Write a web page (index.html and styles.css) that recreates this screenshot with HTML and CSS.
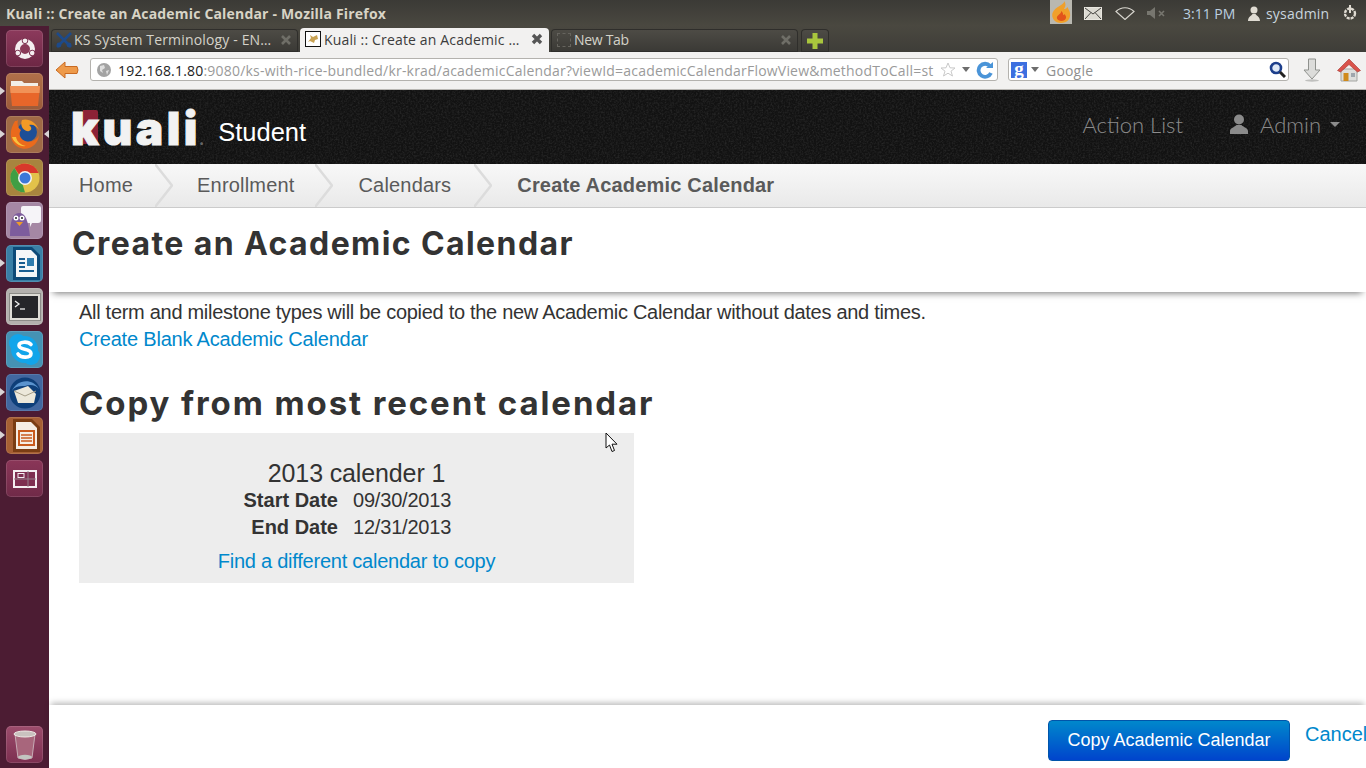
FILE: index.html
```html
<!DOCTYPE html>
<html lang="en">
<head>
<meta charset="utf-8">
<title>Kuali :: Create an Academic Calendar</title>
<link rel="stylesheet" href="styles.css">
</head>
<body>
<div class="screen">
  <header class="panel">
    <div class="panel-title">Kuali :: Create an Academic Calendar - Mozilla Firefox</div>
    <div class="tray">
      <span class="tray-flame"><svg width="22" height="24" viewBox="0 0 22 24"><path d="M14 1C15 5 5 6 2.500 13C1 18 5 23 11 23C17 23 21 19 20 13C19.500 10 18 9 17.500 7C16 9 15 9 14 9C16 6 16 3 14 1Z" fill="#f0a02a"/><path d="M11 11C12 14 6 15 7 18.500C8 21.500 15 22 16 18C16.500 16 15 15 14.500 14C14 15.500 13 15 13 14C13 13 12.500 12 11 11Z" fill="#e2541a"/></svg></span>
      <svg class="tray-mail" width="18" height="13" viewBox="0 0 18 13"><rect x="0.500" y="0.500" width="17" height="12" fill="#dcdad2" stroke="#e8e6df"/><path d="M1 1L9 7L17 1M1 12L7 5.500M17 12L11 5.500" fill="none" stroke="#44433f" stroke-width="1"/></svg>
      <svg class="tray-wifi" width="20" height="13" viewBox="0 0 20 13"><path d="M1 4.500C6 -0.500 14 -0.500 19 4.500L10 12.500Z" fill="none" stroke="#d8d6cf" stroke-width="1.200"/></svg>
      <svg class="tray-sound" width="19" height="12" viewBox="0 0 19 12"><path d="M0 4H3L8 0V12L3 8H0Z" fill="#77766f"/><path d="M12 4L17 9M17 4L12 9" stroke="#77766f" stroke-width="1.600"/></svg>
      <span class="tray-clock">3:11 PM</span>
      <svg class="tray-user" width="12" height="15" viewBox="0 0 12 15"><circle cx="6" cy="4" r="3.500" fill="#dfdbd2"/><path d="M0 15C0 11 3 10 4.500 8H7.500C9 10 12 11 12 15Z" fill="#dfdbd2"/></svg>
      <span class="tray-name">sysadmin</span>
      <svg class="tray-gear" width="16" height="16" viewBox="0 0 16 16"><circle cx="8" cy="8.500" r="5" fill="none" stroke="#dfdbd2" stroke-width="2.400" stroke-dasharray="3 1"/><path d="M8 0V8" stroke="#dfdbd2" stroke-width="2"/></svg>
    </div>
  </header>

  <div class="desk">
    <nav class="launcher">
      <div class="tile tile-ubuntu"><svg width="24" height="24" viewBox="0 0 24 24"><circle cx="12" cy="12" r="7.500" fill="#8a3a58" stroke="#f4eef0" stroke-width="5"/><circle cx="12" cy="3.800" r="2.800" fill="#f4eef0" stroke="#7c2f4e"/><circle cx="4.800" cy="16" r="2.800" fill="#f4eef0" stroke="#7c2f4e"/><circle cx="19.200" cy="16" r="2.800" fill="#f4eef0" stroke="#7c2f4e"/></svg></div>
      <div class="tile tile-files pip"><svg width="30" height="28" viewBox="0 0 30 28"><path d="M1 3H12L14 5H28V10H1Z" fill="#f3efe8"/><path d="M0 8H30L28 28H2Z" fill="#e8662a"/><path d="M0 8H30L29.500 15H0.500Z" fill="#f19257"/></svg></div>
      <div class="tile tile-firefox pip pip-both"><svg width="33" height="33" viewBox="0 0 33 33"><circle cx="19" cy="14" r="10" fill="#1d4f97"/><path d="M7 3C1 12 1 24 10 29C19 34 30 28 31 17C29 22 23 25 17 23C12 21 10 16 13 12C10 10 9 7 10 2C9 3 8 3 7 3Z" fill="#ea6a1c"/><path d="M14 2C20 0 28 4 31 12C28 7 24 6 21 7C24 9 24 12 21 13C18 14 15 11 14 9C13 7 13 4 14 2Z" fill="#f29a26"/><path d="M4 19C6 25 12 29 18 28C13 27 9 24 8 19Z" fill="#f8c23e"/></svg></div>
      <div class="tile tile-chrome"><svg width="30" height="30" viewBox="0 0 30 30"><circle cx="15" cy="15" r="14.500" fill="#e2c24a"/><path d="M15 .500A14.500 14.500 0 0 1 28.600 10H15A5 5 0 0 0 10 13L4.500 5A14.500 14.500 0 0 1 15 .500Z" fill="#d8392b"/><path d="M4.500 5L11 16L15 29.500A14.500 14.500 0 0 1 4.500 5Z" fill="#3f9e44"/><circle cx="15" cy="15" r="7" fill="#f4f4f4"/><circle cx="15" cy="15" r="5.500" fill="#3c78d8"/></svg></div>
      <div class="tile tile-pidgin"><svg width="34" height="32" viewBox="0 0 34 32"><path d="M15 1H31Q33 1 33 3V15Q33 18 30 18H24L22 22V18H15Q13 18 13 16V3Q13 1 15 1Z" fill="#f6f4f8"/><path d="M2 31C2 18 4 8 11 8C18 8 20 16 22 31Z" fill="#7d5c9d"/><circle cx="8" cy="13" r="2.500" fill="#fff"/><circle cx="14" cy="13" r="2.500" fill="#fff"/><circle cx="8" cy="13" r="1" fill="#222"/><circle cx="14" cy="13" r="1" fill="#222"/><path d="M8 17H15L11.500 21Z" fill="#ec9a2a"/></svg></div>
      <div class="tile tile-writer pip"><svg width="30" height="33" viewBox="0 0 30 33"><path d="M3 0H22L30 8V33H3Z" fill="#0d4a78"/><path d="M6 3H21L27 9V30H6Z" fill="#f4f6f8"/><path d="M9 12H15M9 16H15M9 20H15M9 24H24" stroke="#1a5e91" stroke-width="2"/><rect x="17" y="11" width="7" height="8" fill="#2f7cae"/></svg></div>
      <div class="tile tile-term"><svg width="32" height="28" viewBox="0 0 32 28"><rect x=".500" y=".500" width="31" height="27" fill="#dedcd7" stroke="#8d8c88"/><rect x="3" y="3" width="26" height="22" fill="#26262a"/><path d="M6 8L10 11L6 14" fill="none" stroke="#eee" stroke-width="1.300"/><path d="M11 16H16" stroke="#eee" stroke-width="1.300"/></svg></div>
      <div class="tile tile-skype"><svg width="33" height="33" viewBox="0 0 33 33"><circle cx="10" cy="10" r="9" fill="#12a5ea"/><circle cx="23" cy="23" r="9" fill="#12a5ea"/><circle cx="16.500" cy="16.500" r="13.500" fill="#12a5ea"/><path d="M23 11.500C20 8 11 8.500 11 12.500C11 17.500 23 15 23 20.500C23 25 13 25.500 10 21" fill="none" stroke="#fff" stroke-width="3.600" stroke-linecap="round"/></svg></div>
      <div class="tile tile-bird pip"><svg width="33" height="32" viewBox="0 0 33 32"><circle cx="17" cy="16" r="15.500" fill="#0e3f79"/><path d="M4 14C8 3 24 0 31 12C28 8 22 7 17 9C10 9 6 10 4 14Z" fill="#5a93ce"/><path d="M6 14L20 9L28 17L26 26H10Z" fill="#ece8da"/><path d="M6 14L17 19L28 14" fill="none" stroke="#a59e88"/></svg></div>
      <div class="tile tile-impress pip"><svg width="30" height="33" viewBox="0 0 30 33"><path d="M3 0H22L30 8V33H3Z" fill="#7a3d14"/><path d="M6 3H21L27 9V30H6Z" fill="#f5ede4"/><rect x="9" y="12" width="15" height="14" fill="none" stroke="#c85a1c" stroke-width="2"/><path d="M11 16H22M11 19H22M11 22H22" stroke="#c85a1c" stroke-width="1.500"/></svg></div>
      <div class="tile tile-work"><svg width="24" height="18" viewBox="0 0 24 18"><rect x="1" y="1" width="22" height="16" fill="#7e2f50" stroke="#f4eef0" stroke-width="2"/><path d="M15 1V17M1 9H23" stroke="#96808a" stroke-width="1"/><rect x="5" y="3.500" width="6" height="4" fill="none" stroke="#f4eef0"/></svg></div>
      <div class="tile tile-trash"><svg width="24" height="30" viewBox="0 0 24 30"><path d="M2 4L5 28Q12 31 19 28L22 4Z" fill="#a8667c" stroke="#c7abb5"/><ellipse cx="12" cy="4" rx="11" ry="3" fill="#c9c2bf" stroke="#efeae6"/><ellipse cx="12" cy="27" rx="7" ry="2.200" fill="#c2c5c0"/></svg></div>
    </nav>

    <div class="browser">
      <div class="tabbar">
        <div class="tab tab-one">
          <svg class="fav" width="16" height="16" viewBox="0 0 16 16"><path d="M1 1L15 15M15 1L1 15" stroke="#1d4a8a" stroke-width="2.600"/><circle cx="3" cy="13" r="2.400" fill="#1d4a8a"/><circle cx="13" cy="13" r="2.400" fill="#1d4a8a"/></svg>
          <span class="tab-label">KS System Terminology - EN…</span>
          <svg class="tab-x" width="12" height="12" viewBox="0 0 12 12"><path d="M2 2L10 10M10 2L2 10" stroke="#6f6e67" stroke-width="2.600"/></svg>
        </div>
        <div class="tab tab-two">
          <svg class="fav" width="16" height="16" viewBox="0 0 16 16"><rect x=".500" y=".500" width="15" height="15" fill="#fff" stroke="#111"/><path d="M3 11L6 7L5 4L8 6L12 4L13 8L10 9L9 12L5 10Z" fill="#c9a253"/></svg>
          <span class="tab-label">Kuali :: Create an Academic …</span>
          <svg class="tab-x" width="12" height="12" viewBox="0 0 12 12"><path d="M2 2L10 10M10 2L2 10" stroke="#555" stroke-width="3.400"/></svg>
        </div>
        <div class="tab tab-three">
          <span class="fav-blank"></span>
          <span class="tab-label">New Tab</span>
          <svg class="tab-x" width="12" height="12" viewBox="0 0 12 12"><path d="M2 2L10 10M10 2L2 10" stroke="#6f6e67" stroke-width="2.600"/></svg>
        </div>
        <div class="tab-new"><svg width="16" height="16" viewBox="0 0 16 16"><path d="M5.500 0H10.500V5.500H16V10.500H10.500V16H5.500V10.500H0V5.500H5.500Z" fill="#a9c63d"/></svg></div>
      </div>

      <div class="navbar">
        <svg class="nav-back" width="24" height="18" viewBox="0 0 24 18"><path d="M10 1L1 9L10 17V12.500H22Q24 9 22 5.500H10Z" fill="#ee9a4a" stroke="#c96a22"/></svg>
        <div class="urlbar">
          <svg class="globe" width="14" height="14" viewBox="0 0 14 14"><circle cx="7" cy="7" r="7" fill="#a3a3a3"/><path d="M3 3L7 2L8 5L5 7L6 10L3 8ZM9 8L12 7L10 12Z" fill="#dedede"/></svg>
          <span class="url"><span class="url-host">192.168.1.80</span>:9080/ks-with-rice-bundled/kr-krad/academicCalendar?viewId=academicCalendarFlowView&amp;methodToCall=st</span>
          <svg class="star" width="16" height="15" viewBox="0 0 16 15"><path d="M8 1L10 5.800L15 6L11 9.200L12.500 14L8 11.200L3.500 14L5 9.200L1 6L6 5.800Z" fill="#fff" stroke="#c9c9c9"/></svg>
          <span class="drop"></span>
          <svg class="reload" width="18" height="18" viewBox="0 0 18 18"><path d="M14 5A6.500 6.500 0 1 0 15 12" fill="none" stroke="#4a94d8" stroke-width="3.800"/><path d="M10 7H17V1Z" fill="#4a94d8"/></svg>
        </div>
        <div class="searchbar">
          <span class="g-badge">g</span>
          <span class="drop"></span>
          <span class="search-text">Google</span>
          <svg class="lens" width="17" height="17" viewBox="0 0 17 17"><circle cx="7" cy="7" r="5" fill="#dfe9f6" stroke="#1d3f8c" stroke-width="2.600"/><path d="M11 11L16 16" stroke="#222" stroke-width="3"/></svg>
        </div>
        <svg class="nav-down" width="18" height="24" viewBox="0 0 18 24"><path d="M5.500 1H12.500V12H17L9 21L1 12H5.500Z" fill="#dcdcda" stroke="#8f918d"/><ellipse cx="9" cy="22.500" rx="7" ry="1.200" fill="#c0c0be"/></svg>
        <svg class="nav-home" width="24" height="24" viewBox="0 0 24 24"><path d="M4 11H20V23H4Z" fill="#dededc" stroke="#a3a5a1"/><path d="M12 1L23.500 12.500L20.500 14L12 6.500L3.500 14L.5 12.500Z" fill="#d9534b" stroke="#a5322c" stroke-width=".6"/><rect x="6.500" y="15" width="5" height="8" fill="#d08a1c"/><rect x="14" y="15" width="4" height="4" fill="#9fa6ad"/></svg>
      </div>

      <main class="page">
        <div class="kheader">
          <svg class="grain" width="1317" height="74"><filter id="n"><feTurbulence type="fractalNoise" baseFrequency="0.55" numOctaves="3" seed="4"/><feColorMatrix values="0 0 0 0 1 0 0 0 0 1 0 0 0 0 1 .18 0 0 0 -.07"/></filter><rect width="1317" height="74" filter="url(#n)"/></svg>
          <div class="brand">
            <span class="logo"><span class="logo-k">k</span>uali<span class="logo-dot">.</span></span>
            <span class="brand-name">Student</span>
          </div>
          <div class="kmenu">
            <span class="kmenu-item">Action List</span>
            <span class="kmenu-item kmenu-admin">
              <svg width="18" height="20" viewBox="0 0 18 20"><circle cx="9" cy="5.500" r="5" fill="#8a8a8a"/><path d="M0 20V17C0 14 5 13 6.500 11H11.500C13 13 18 14 18 17V20Z" fill="#8a8a8a"/></svg>
              <span>Admin</span><span class="caret"></span>
            </span>
          </div>
        </div>

        <div class="crumbs">
          <span class="crumb crumb-home">Home</span>
          <svg class="chev" width="18" height="43" viewBox="0 0 18 43"><path d="M0 0L17 21.500L0 43" fill="none" stroke="#dcdcdc" stroke-width="2.500"/></svg>
          <span class="crumb crumb-enroll">Enrollment</span>
          <svg class="chev" width="18" height="43" viewBox="0 0 18 43"><path d="M0 0L17 21.500L0 43" fill="none" stroke="#dcdcdc" stroke-width="2.500"/></svg>
          <span class="crumb crumb-cal">Calendars</span>
          <svg class="chev" width="18" height="43" viewBox="0 0 18 43"><path d="M0 0L17 21.500L0 43" fill="none" stroke="#dcdcdc" stroke-width="2.500"/></svg>
          <span class="crumb crumb-now">Create Academic Calendar</span>
        </div>

        <div class="titlebox"><h1>Create an Academic Calendar</h1></div>

        <section class="content">
          <p class="lead">All term and milestone types will be copied to the new Academic Calendar without dates and times.</p>
          <a class="link" href="#">Create Blank Academic Calendar</a>
          <h2>Copy from most recent calendar</h2>
          <div class="copybox">
            <div class="copy-name">2013 calender 1</div>
            <dl class="dates">
              <dt>Start Date</dt><dd>09/30/2013</dd>
              <dt>End Date</dt><dd>12/31/2013</dd>
            </dl>
            <a class="link copy-find" href="#">Find a different calendar to copy</a>
          </div>
        </section>

        <footer class="actions">
          <button class="primary" type="button">Copy Academic Calendar</button>
          <a class="link cancel" href="#">Cancel</a>
        </footer>

        <svg class="cursor" width="14" height="21" viewBox="0 0 14 21"><path d="M1 1V16L4.500 13L7 19.500L9.500 18.500L7 12.200H12Z" fill="#fff" stroke="#111" stroke-width="1"/></svg>
      </main>
    </div>
  </div>
</div>
</body>
</html>
```
FILE: styles.css
```css
* { box-sizing: border-box; }
html, body { margin: 0; padding: 0; }
body { width: 1366px; height: 768px; overflow: hidden; font-family: "Liberation Sans", Arial, sans-serif; background: #fff; }
.screen { width: 1366px; height: 768px; display: flex; flex-direction: column; }

/* top panel */
.panel { height: 26px; flex: none; display: flex; align-items: center; justify-content: space-between; background: linear-gradient(#3b3a36, #4a4840); }
.panel-title { margin-left: 6px; font: 700 14px "Open Sans", sans-serif; color: #d8d4c6; letter-spacing: .18px; white-space: nowrap; }
.tray { display: flex; align-items: center; height: 26px; padding-right: 8px; color: #dfdbd2; font: 400 14px "Open Sans", sans-serif; white-space: nowrap; }
.tray-flame { width: 22px; height: 24px; margin-top: -2px; background: #b9b8b0; display: block; margin-right: 12px; }
.tray-flame svg { display: block; }
.tray-mail { margin-right: 13px; }
.tray-wifi { margin-right: 12px; }
.tray-sound { margin-right: 17px; }
.tray-clock { margin-right: 13px; width: 52px; color: #bcd0e0; }
.tray-user { margin-right: 6px; }
.tray-name { width: 64px; margin-right: 12px; color: #c9d5de; letter-spacing: .2px; }

.desk { flex: 1; display: flex; min-height: 0; }

/* launcher */
.launcher { width: 49px; flex: none; background: #4c1c33; display: flex; flex-direction: column; gap: 6px; padding: 4px 0 5px 6px; position: relative; }
.tile { width: 37px; height: 37px; border-radius: 5px; display: flex; align-items: center; justify-content: center; position: relative; flex: none; box-shadow: inset 0 0 0 1px rgba(255,255,255,.12); }
.pip::before { content: ""; position: absolute; left: -6px; top: 14px; border: 4px solid transparent; border-left: 5px solid #d9d4d6; border-right: 0; }
.pip-both::after { content: ""; position: absolute; right: -6px; top: 14px; border: 4px solid transparent; border-right: 5px solid #d9d4d6; border-left: 0; }
.tile-ubuntu { background: linear-gradient(#8c3a5c, #6d2644); }
.tile-files { background: linear-gradient(#b0704a, #9c5a3a); }
.tile-firefox { background: #a06a46; }
.tile-chrome { background: #a8843e; }
.tile-pidgin { background: #a587a4; }
.tile-writer { background: #3a7fa6; }
.tile-term { background: #b4b1ae; }
.tile-skype { background: #4592b4; }
.tile-bird { background: #41679f; }
.tile-impress { background: #a65f33; }
.tile-work { background: linear-gradient(#8a3658, #702a48); }
.tile-trash { background: linear-gradient(#9c4c6c, #7c2f50); margin-top: auto; }

.browser { flex: 1; min-width: 0; display: flex; flex-direction: column; }

/* tabs */
.tabbar { height: 26px; flex: none; background: linear-gradient(#4a4840, #3e3d38); display: flex; align-items: flex-end; padding-left: 2px; gap: 2px; }
.tab { height: 23px; border-radius: 4px 4px 0 0; display: flex; align-items: center; padding: 0 6px 2px 5px; font: 400 14px "Open Sans", sans-serif; color: #d4d2c9; background: linear-gradient(#4e4c46, #3a3935); box-shadow: inset 0 0 0 1px #2f2e2b; flex: none; letter-spacing: .16px; }
.tab-one { width: 247px; }
.tab-two { width: 249px; height: 24px; background: #f2f1f0; color: #3c3c3c; box-shadow: none; }
.tab-three { width: 247px; }
.fav { flex: none; margin-right: 3px; }
.tab-one .fav { margin-right: 2px; }
.fav-blank { width: 14px; height: 14px; margin: 0 3px 0 1px; border: 1px dashed #66645e; flex: none; }
.tab-three .tab-label { letter-spacing: -.3px; }
.tab-label { flex: 1; white-space: nowrap; overflow: hidden; }
.tab-x { flex: none; }
.tab-new { width: 28px; height: 23px; border-radius: 4px 4px 0 0; background: linear-gradient(#4e4c46, #3a3935); box-shadow: inset 0 0 0 1px #2f2e2b; display: flex; align-items: center; justify-content: center; margin-left: 1px; }

/* toolbar */
.navbar { height: 38px; flex: none; background: #f2f1f0; border-bottom: 1px solid #b9b7b3; display: flex; align-items: center; padding: 0 6px 2px 6px; }
.nav-back { flex: none; margin-right: 11px; }
.urlbar { width: 908px; height: 23px; flex: none; background: #fff; border: 1px solid #b4b2ae; border-radius: 3px; display: flex; align-items: center; padding: 0 3px 0 6px; margin-right: 10px; font: 400 14px "Open Sans", sans-serif; }
.globe { flex: none; margin-right: 7px; }
.url { flex: 1; white-space: nowrap; overflow: hidden; color: #9a9a9a; letter-spacing: .2px; padding-top: 2px; }
.url-host { color: #222; }
.star { flex: none; margin: 0 6px 0 3px; }
.drop { flex: none; width: 0; height: 0; border: 4px solid transparent; border-top: 5px solid #6d6d6d; border-bottom: 0; }
.reload { flex: none; margin-left: 6px; }
.searchbar { width: 281px; height: 23px; flex: none; background: #fff; border: 1px solid #b4b2ae; border-radius: 3px; display: flex; align-items: center; padding: 0 2px; margin-right: 14px; font: 400 14px "Open Sans", sans-serif; }
.g-badge { width: 16px; height: 16px; background: #3c6fe0; color: #fff; font: 700 19px/13px "Liberation Serif", serif; text-align: center; margin-right: 4px; flex: none; }
.search-text { flex: 1; color: #8f8f8f; margin-left: 7px; padding-top: 2px; letter-spacing: .2px; }
.lens { flex: none; }
.nav-down { flex: none; margin-right: 16px; }
.nav-home { flex: none; }

/* page */
.page { flex: 1; display: flex; flex-direction: column; position: relative; min-height: 0; background: #fff; color: #333; }
.kheader { height: 74px; flex: none; background: #121212; display: flex; justify-content: space-between; position: relative; }
.grain { position: absolute; left: 0; top: 0; }
.brand { position: relative; display: flex; align-items: flex-start; padding: 0 0 0 22px; height: 74px; }
.logo { font: 900 46px/76px "Inter", sans-serif; color: #f2f2f2; letter-spacing: 3.500px; position: relative; z-index: 0; white-space: nowrap; -webkit-text-stroke: 1px #f2f2f2; }
.logo-k { display: inline-block; position: relative; }
.logo-k::before { content: ""; position: absolute; z-index: -1; left: 12px; right: 4px; top: 20px; height: 34px; background: #8c2236; border-radius: 0 2px 0 0; }
.logo-dot { color: #666; font-size: 14px; letter-spacing: 0; margin-left: -2px; -webkit-text-stroke: 0; }
.brand-name { font: 400 25.500px/30px "Liberation Sans", sans-serif; color: #fff; margin: 27px 0 0 14px; }
.kmenu { position: relative; display: flex; align-items: center; color: #8c8c8c; font: 300 22px "Lato", sans-serif; padding: 0 26px 6px 0; gap: 47px; }
.kmenu-admin { display: flex; align-items: center; gap: 12px; }
.caret { width: 0; height: 0; border: 5px solid transparent; border-top: 5px solid #8c8c8c; border-bottom: 0; margin-left: -3px; }

.crumbs { height: 44px; flex: none; background: linear-gradient(#f8f8f8, #e9e9e9); border-bottom: 1px solid #ccc; display: flex; align-items: center; font-size: 20px; color: #5a5a5a; padding-left: 30px; letter-spacing: .18px; }
.chev { flex: none; align-self: flex-start; }
.crumb-home { margin-right: 22px; }
.crumb-enroll { margin: 0 21px 0 24px; }
.crumb-cal { margin: 0 23px 0 25px; }
.crumb-now { margin-left: 25px; font-weight: 700; }

.titlebox { height: 84px; flex: none; padding: 17px 0 0 23px; background: #fff; box-shadow: 0 5px 7px -4px rgba(0,0,0,.55); position: relative; }
h1 { margin: 0; font: 700 32px/38px "Inter", sans-serif; letter-spacing: 1.400px; color: #333; white-space: nowrap; }

.content { flex: 1; padding: 7px 0 0 30px; font-size: 20px; line-height: 27px; letter-spacing: -.29px; }
.lead { margin: 0; color: #333; }
.link { color: #0088cc; text-decoration: none; letter-spacing: -.19px; }
h2 { margin: 30px 0 10px; font: 700 33px/40px "Inter", sans-serif; letter-spacing: 1.900px; color: #333; white-space: nowrap; }
.copybox { width: 555px; height: 150px; background: #ededed; text-align: center; padding-top: 27px; }
.copy-name { font-size: 25px; line-height: 27px; letter-spacing: -.13px; }
.dates { margin: 0; display: grid; grid-template-columns: 259px auto; column-gap: 15px; justify-content: start; line-height: 27px; letter-spacing: -.2px; }
dt { font-weight: 700; text-align: right; letter-spacing: 0; }
dd { margin: 0; text-align: left; }
.copy-find { display: block; margin-top: 7px; letter-spacing: -.24px; }

.actions { height: 63px; flex: none; display: flex; justify-content: flex-end; align-items: flex-start; box-shadow: 0 -4px 6px -2px rgba(0,0,0,.28); padding-top: 15px; position: relative; background: #fff; }
.primary { width: 242px; height: 41px; border: 1px solid #0055aa; border-radius: 4px; background: linear-gradient(#0088cc, #0044cc); color: #fff; font: 400 18px "Liberation Sans", sans-serif; padding: 0; }
.cancel { font-size: 20px; margin: 2px 0 0 15px; line-height: 24px; width: 61px; overflow: hidden; white-space: nowrap; letter-spacing: 0; }
.cursor { position: absolute; left: 556px; top: 342px; }
```
